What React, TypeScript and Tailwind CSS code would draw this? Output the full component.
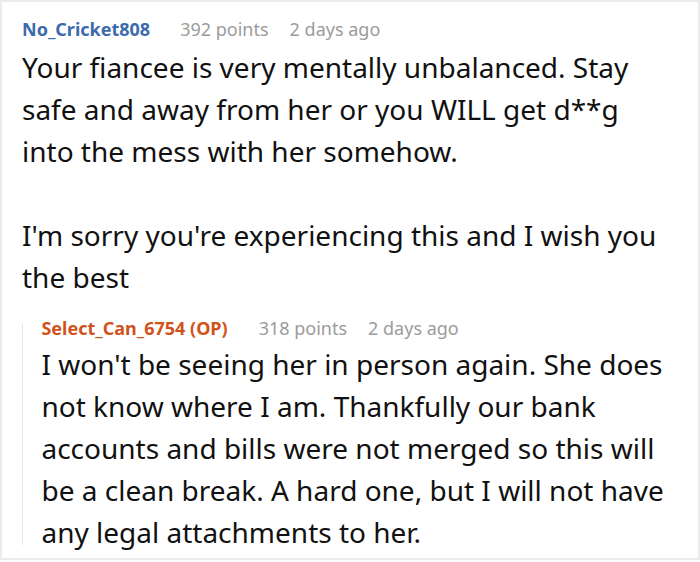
const font = { fontFamily: '"Noto Sans", "Open Sans", sans-serif' };

export default function App() {
  return (
    <div className="w-[700px] h-[562px] bg-white" style={font}>
      <div className="h-[560px] border-2 border-[#ebebeb] pl-[20px] pr-[28px] pt-[15px] overflow-hidden">
        {/* parent comment */}
        <div className="flex items-baseline h-6 leading-6 text-[18px]">
          <span className="font-bold text-[#3b6aad]">No_Cricket808</span>
          <span className="ml-[30px] text-[#9b9b9b]">392 points</span>
          <span className="ml-[21px] text-[#9b9b9b]">2 days ago</span>
        </div>
        <div className="mt-[5px] text-[28px] leading-[42px] text-[#111]">
          <p>
            Your fiancee is very mentally unbalanced. Stay safe and away from her or you WILL get d**g into the mess
            with her somehow.
          </p>
          <p className="mt-[42px]">I'm sorry you're experiencing this and I wish you the best</p>
        </div>

        {/* reply */}
        <div className="flex mt-[18px]">
          <div className="w-[2px] bg-[#e6e6e6] mt-2 mb-2" />
          <div className="pl-[19px]">
            <div className="flex items-baseline h-6 leading-6 text-[18px]">
              <span className="font-bold text-[#d0531c]">Select_Can_6754 (OP)</span>
              <span className="ml-[31px] text-[#9b9b9b]">318 points</span>
              <span className="ml-[21px] text-[#9b9b9b]">2 days ago</span>
            </div>
            <p className="mt-[3px] text-[28px] leading-[42px] text-[#111]">
              I won't be seeing her in person again. She does not know where I am. Thankfully our bank accounts and
              bills were not merged so this will be a clean break. A hard one, but I will not have any legal
              attachments to her.
            </p>
          </div>
        </div>
      </div>
    </div>
  );
}
